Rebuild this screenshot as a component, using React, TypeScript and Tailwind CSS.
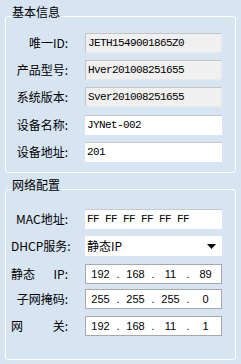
import React from "react";

const cjk = { fontFamily: '"Noto Sans CJK SC", "Noto Sans", sans-serif' };
const mono = { fontFamily: '"Liberation Mono", "DejaVu Sans Mono", monospace' };
const sans = { fontFamily: '"Liberation Sans", "DejaVu Sans", sans-serif' };

function Label({ children }: { children: React.ReactNode }) {
  return (
    <div className="w-[57px] text-right text-[12px] leading-[20px] text-black whitespace-pre" style={cjk}>
      {children}
    </div>
  );
}

function Spread({ a, b }: { a: string; b: string }) {
  return (
    <div className="w-[57px] flex justify-between text-[12px] leading-[20px] text-black" style={cjk}>
      <span>{a}</span>
      <span>{b}</span>
    </div>
  );
}

function TextBox({ value, readOnly }: { value: string; readOnly?: boolean }) {
  return (
    <div
      className={
        "w-[137px] h-[20px] flex items-center pl-[2px] text-[11px] tracking-[-0.6px] text-black " +
        (readOnly
          ? "bg-[#f0f0f0] border border-[#c4c4c4] border-r-[#e8e8e8] border-b-[#e8e8e8]"
          : "bg-white border-t border-[#c8c8c8]")
      }
      style={mono}
    >
      {value}
    </div>
  );
}

function IpBox({ parts }: { parts: string[] }) {
  return (
    <div className="w-[137px] h-[20px] bg-white border border-[#a8a8a8] flex items-center text-[11px] text-black" style={sans}>
      {parts.map((p, i) => (
        <React.Fragment key={i}>
          <span className="w-[29px] text-center">{p}</span>
          {i < 3 && <span className="w-[6px] text-center">.</span>}
        </React.Fragment>
      ))}
    </div>
  );
}

function Row({ label, children }: { label: React.ReactNode; children: React.ReactNode }) {
  return (
    <div className="flex items-center gap-[17px] h-[20px]">
      {label}
      {children}
    </div>
  );
}

function Group({ title, children, className }: { title: string; children: React.ReactNode; className: string }) {
  return (
    <div className={"relative w-[231px] border border-white rounded-[3px] " + className}>
      <div
        className="absolute left-[5px] top-[-11px] px-[1px] bg-[#d7e4f2] text-[12px] leading-[12px] text-black"
        style={cjk}
      >
        {title}
      </div>
      {children}
    </div>
  );
}

export default function App() {
  return (
    <div className="w-[241px] h-[364px] bg-[#d7e4f2] pl-[5px] pt-[16px] overflow-hidden">
      <Group title="基本信息" className="h-[157px] pl-[5px] pt-[16px]">
        <div className="flex flex-col gap-[7px]">
          <Row label={<Label>唯一ID:</Label>}>
            <TextBox value="JETH1549001865Z0" readOnly />
          </Row>
          <Row label={<Label>产品型号:</Label>}>
            <TextBox value="Hver201008251655" readOnly />
          </Row>
          <Row label={<Label>系统版本:</Label>}>
            <TextBox value="Sver201008251655" readOnly />
          </Row>
          <div className="h-[4px]" />
        </div>
        <div className="flex flex-col gap-[7px] -mt-[3px]">
          <Row label={<Label>设备名称:</Label>}>
            <TextBox value="JYNet-002" />
          </Row>
          <Row label={<Label>设备地址:</Label>}>
            <TextBox value="201" />
          </Row>
        </div>
      </Group>
      <Group title="网络配置" className="h-[171px] mt-[16px] pl-[5px] pt-[19px]">
        <div className="flex flex-col">
          <Row label={<Label>MAC地址:</Label>}>
            <TextBox value="FF FF FF FF FF FF" />
          </Row>
          <div className="h-[7px]" />
          <Row label={<Label>DHCP服务:</Label>}>
            <div className="w-[137px] h-[20px] bg-white flex items-center justify-between pl-[2px] pr-[6px] text-[12px] text-black" style={cjk}>
              <span>静态IP</span>
              <svg width="9" height="5" viewBox="0 0 9 5">
                <polygon points="0,0 9,0 4.5,5" fill="#000" />
              </svg>
            </div>
          </Row>
          <div className="h-[8px]" />
          <Row label={<Spread a="静态" b="IP:" />}>
            <IpBox parts={["192", "168", "11", "89"]} />
          </Row>
          <div className="h-[5px]" />
          <Row label={<Label>子网掩码:</Label>}>
            <IpBox parts={["255", "255", "255", "0"]} />
          </Row>
          <div className="h-[7px]" />
          <Row label={<Spread a="网" b="关:" />}>
            <IpBox parts={["192", "168", "11", "1"]} />
          </Row>
        </div>
      </Group>
    </div>
  );
}
